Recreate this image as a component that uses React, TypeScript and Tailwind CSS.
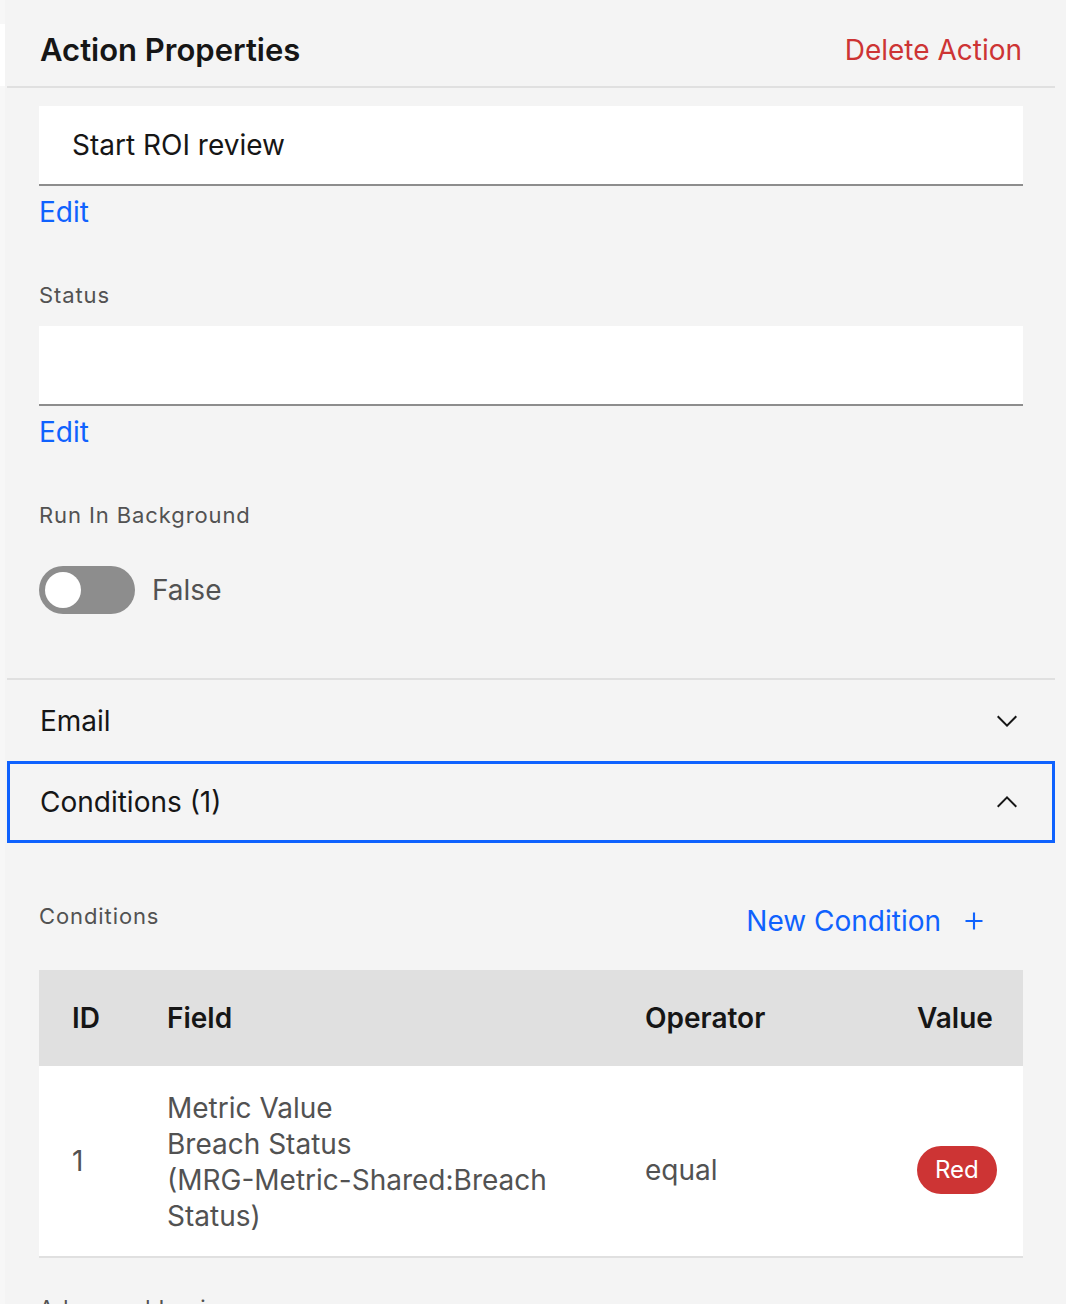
type Condition = {
  id: number;
  field: string[];
  operator: string;
  value: string;
};

const conditions: Condition[] = [
  {
    id: 1,
    field: ["Metric Value", "Breach Status", "(MRG-Metric-Shared:Breach", "Status)"],
    operator: "equal",
    value: "Red",
  },
];

function Chevron({ up }: { up?: boolean }) {
  return (
    <svg width="32" height="32" viewBox="0 0 16 16" fill="#161616" className={up ? "rotate-180" : ""}>
      <path d="M8 11L3 6l.7-.7L8 9.6l4.3-4.3.7.7z" />
    </svg>
  );
}

function AddIcon() {
  return (
    <svg width="34" height="34" viewBox="0 0 32 32" fill="#0f62fe">
      <path d="M17 15V8h-2v7H8v2h7v7h2v-7h7v-2z" />
    </svg>
  );
}

function TextField({ value }: { value?: string }) {
  return (
    <div className="h-[80px] bg-white border-b-2 border-[#8d8d8d] flex items-center pl-[33px] text-[28px] text-[#161616]">
      {value}
    </div>
  );
}

function EditLink() {
  return <div className="mt-[8px] h-[36px] leading-[36px] text-[28px] text-[#0f62fe]">Edit</div>;
}

function FieldLabel({ children, className = "" }: { children: string; className?: string }) {
  return (
    <div className={`h-[28px] leading-[28px] text-[22px] tracking-[0.9px] text-[#525252] ${className}`}>
      {children}
    </div>
  );
}

export default function App() {
  return (
    <div className="w-[1066px] h-[1304px] overflow-hidden bg-[#f4f4f4] flex font-['Inter',sans-serif]">
      <div className="w-[5px] shrink-0 bg-[#f7f7f7] pt-[24px]">
        <div className="h-[62px] bg-white" />
      </div>

      <div className="w-[1050px] shrink-0">
        <div className="h-[88px] pt-[14px] pl-[33px] pr-[33px] ml-[2px] border-b-2 border-[#e0e0e0] flex items-center justify-between">
          <h2 className="text-[31px] font-semibold text-[#161616]">Action Properties</h2>
          <button className="text-[28px] text-[#cd3434]">Delete Action</button>
        </div>

        <div className="pl-[34px] pr-[32px] pt-[18px] pb-[64px]">
          <TextField value="Start ROI review" />
          <EditLink />

          <FieldLabel className="mt-[51px]">Status</FieldLabel>
          <div className="mt-[17px]">
            <TextField />
          </div>
          <EditLink />

          <FieldLabel className="mt-[51px]">Run In Background</FieldLabel>
          <div className="mt-[37px] flex items-center gap-[17px]">
            <div className="w-[96px] h-[48px] rounded-full bg-[#8d8d8d] flex items-center pl-[6px]">
              <div className="w-[36px] h-[36px] rounded-full bg-white" />
            </div>
            <span className="text-[28px] text-[#525252]">False</span>
          </div>
        </div>

        <div className="ml-[2px]">
          <div className="h-[83px] border-t-2 border-[#e0e0e0] flex items-center justify-between pl-[33px] pr-[32px]">
            <span className="text-[28px] text-[#161616]">Email</span>
            <Chevron />
          </div>
          <div className="h-[82px] border-[3px] border-[#0f62fe] flex items-center justify-between pl-[30px] pr-[29px]">
            <span className="text-[28px] text-[#161616]">Conditions (1)</span>
            <Chevron up />
          </div>
        </div>

        <div className="pl-[34px] pr-[32px]">
          <div className="h-[127px] pt-[58px] flex justify-between items-start">
            <FieldLabel className="mt-[1px]">Conditions</FieldLabel>
            <button className="mt-[2px] mr-[32px] h-[36px] flex items-center gap-[16px] text-[28px] text-[#0f62fe]">
              New Condition
              <AddIcon />
            </button>
          </div>

          <table className="w-full table-fixed border-collapse">
            <colgroup>
              <col className="w-[95px]" />
              <col className="w-[478px]" />
              <col className="w-[272px]" />
              <col className="w-[139px]" />
            </colgroup>
            <thead>
              <tr className="h-[96px] bg-[#e0e0e0] text-left text-[28px] text-[#161616]">
                <th className="pl-[33px] font-semibold">ID</th>
                <th className="pl-[33px] font-semibold">Field</th>
                <th className="pl-[33px] font-semibold">Operator</th>
                <th className="pl-[33px] font-semibold">Value</th>
              </tr>
            </thead>
            <tbody>
              {conditions.map((c) => (
                <tr key={c.id} className="bg-white border-b-2 border-[#e0e0e0] text-[28px] text-[#525252]">
                  <td className="pl-[33px] align-middle">{c.id}</td>
                  <td className="pl-[33px] pt-[24px] pb-[22px] leading-[36px]">
                    {c.field.map((line) => (
                      <div key={line}>{line}</div>
                    ))}
                  </td>
                  <td className="pl-[33px] align-middle pt-[18px]">{c.operator}</td>
                  <td className="pl-[33px] align-middle pt-[18px]">
                    <span className="inline-flex h-[48px] items-center rounded-full bg-[#cd3434] px-[18px] text-[24px] text-white">
                      {c.value}
                    </span>
                  </td>
                </tr>
              ))}
            </tbody>
          </table>

          <FieldLabel className="mt-[36px]">Advanced Logic</FieldLabel>
        </div>
      </div>
    </div>
  );
}
